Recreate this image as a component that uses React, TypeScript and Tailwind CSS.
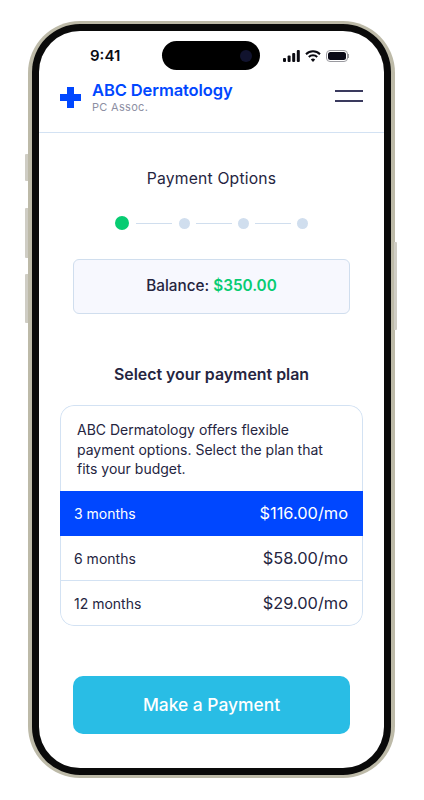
import React from 'react';

const plans = [
  { label: '3 months', price: '$116.00/mo', active: true },
  { label: '6 months', price: '$58.00/mo', active: false },
  { label: '12 months', price: '$29.00/mo', active: false },
];

const StatusIcons = () => (
  <div className="flex items-center gap-[5px]">
    <svg width="17" height="12" viewBox="0 0 17 12" fill="#0b0b12">
      <rect x="0" y="8" width="3" height="4" rx="1" />
      <rect x="4.6" y="5.5" width="3" height="6.5" rx="1" />
      <rect x="9.2" y="3" width="3" height="9" rx="1" />
      <rect x="13.8" y="0" width="3" height="12" rx="1" />
    </svg>
    <svg width="16" height="12" viewBox="0 0 16 12" fill="none" stroke="#0b0b12" strokeWidth="2">
      <path d="M1 4.2a10 10 0 0 1 14 0" />
      <path d="M3.8 7a6 6 0 0 1 8.4 0" />
      <path d="M8 12l-2.2-2.4a3 3 0 0 1 4.4 0z" fill="#0b0b12" stroke="none" />
    </svg>
    <div className="flex items-center">
      <div className="w-[22px] h-[12px] rounded-[4px] border border-[#9a9aa0] p-[1px]">
        <div className="w-full h-full rounded-[2.5px] bg-[#0b0b18]" />
      </div>
      <div className="w-[1px] h-[4px] bg-[#9a9aa0]" />
    </div>
  </div>
);

export default function App() {
  return (
    <div className="w-[424px] h-[800px] bg-white pt-[21px] pl-[28px] overflow-hidden" style={{ fontFamily: 'Inter, sans-serif' }}>
      <div className="relative w-[367px] h-[757px] rounded-[52px] bg-[#bdbaa8] px-[4px] py-[3px]">
        {/* side buttons */}
        <div className="absolute left-[-3px] top-[133px] w-[3px] h-[27px] bg-[#cfcdc4] rounded-l-[1px]" />
        <div className="absolute left-[-3px] top-[187px] w-[3px] h-[50px] bg-[#cfcdc4] rounded-l-[1px]" />
        <div className="absolute left-[-3px] top-[253px] w-[3px] h-[49px] bg-[#cfcdc4] rounded-l-[1px]" />
        <div className="absolute right-[-2px] top-[221px] w-[3px] h-[88px] bg-[#cfcdc4] rounded-r-[1px]" />

        <div className="w-full h-full rounded-[48px] bg-[#0a0a0a] p-[7px]">
          <div className="w-full h-full rounded-[41px] bg-white overflow-hidden flex flex-col">
            {/* status bar */}
            <div className="relative h-[39px] shrink-0 flex items-start justify-between pl-[51px] pr-[35px] pt-[16px]">
              <span className="text-[15px] leading-[18px] font-semibold text-[#0b0b12]">9:41</span>
              <div className="absolute left-[123px] top-[10px] w-[98px] h-[29px] rounded-full bg-black flex items-center justify-end pr-[8px]">
                <div className="w-[12px] h-[12px] rounded-full bg-[#11132e]" />
              </div>
              <div className="mt-[3px]">
                <StatusIcons />
              </div>
            </div>

            {/* header */}
            <div className="h-[63px] shrink-0 flex items-center justify-between pl-[21px] pr-[21px] border-b border-[#d3e2f3] pt-[2px]">
              <div className="flex items-center gap-[11px]">
                <svg width="21" height="21" viewBox="0 0 21 21" fill="#0047ff" className="mt-[-9px]">
                  <path d="M7 0h7v7h7v7h-7v7H7v-7H0V7h7z" />
                </svg>
                <div className="mt-[-10px] flex flex-col gap-[2px]">
                  <p className="text-[16.5px] leading-[18px] font-semibold text-[#0047ff] tracking-[-0.1px]">ABC Dermatology</p>
                  <p className="text-[11px] leading-[13px] text-[#8d8fa3] tracking-[0.3px]">PC Assoc.</p>
                </div>
              </div>
              <div className="flex flex-col gap-[8px] mt-[-12px]">
                <div className="w-[28px] h-[2px] bg-[#3a3a5e]" />
                <div className="w-[28px] h-[2px] bg-[#3a3a5e]" />
              </div>
            </div>

            {/* body */}
            <div className="flex-1 flex flex-col items-center">
              <h1 className="mt-[36px] text-[15.7px] leading-[20px] text-[#25253f] tracking-[0.2px]">Payment Options</h1>

              <div className="mt-[27px] flex items-center">
                <div className="w-[14px] h-[14px] rounded-full bg-[#07cc72]" />
                <div className="w-[36px] h-[1px] bg-[#d0deee] mx-[7px]" />
                <div className="w-[11px] h-[11px] rounded-full bg-[#d0deee]" />
                <div className="w-[36px] h-[1px] bg-[#d0deee] mx-[6px]" />
                <div className="w-[11px] h-[11px] rounded-full bg-[#d0deee]" />
                <div className="w-[36px] h-[1px] bg-[#d0deee] mx-[6px]" />
                <div className="w-[11px] h-[11px] rounded-full bg-[#d0deee]" />
              </div>

              <div className="mt-[29px] w-[277px] h-[55px] rounded-[6px] border border-[#d0deee] bg-[#f7f8fe] flex items-center justify-center text-[15.3px] font-medium text-[#25253f]">
                <span>Balance:&nbsp;</span>
                <span className="text-[#07cc72] font-semibold">$350.00</span>
              </div>

              <h2 className="mt-[51px] text-[15.9px] leading-[20px] font-semibold text-[#25253f]">Select your payment plan</h2>

              <div className="mt-[20px] w-[303px] rounded-[14px] overflow-hidden">
                <p className="h-[86px] pl-[16px] pr-[30px] pt-[14px] text-[14px] leading-[19.5px] text-[#25253f] border border-b-0 border-[#d3e2f3] rounded-t-[14px]">
                  ABC Dermatology offers flexible payment options. Select the plan that fits your budget.
                </p>
                {plans.map((plan) => (
                  <div
                    key={plan.label}
                    className={
                      plan.active
                        ? 'h-[45px] flex items-center justify-between pl-[14px] pr-[15px] bg-[#0047ff] text-white'
                        : 'h-[45px] flex items-center justify-between pl-[13px] pr-[14px] border-x border-b border-[#d3e2f3] last:rounded-b-[14px] text-[#25253f]'
                    }
                  >
                    <span className="text-[14px]">{plan.label}</span>
                    <span className="text-[16.4px]">{plan.price}</span>
                  </div>
                ))}
              </div>

              <button className="mt-[50px] w-[277px] h-[58px] rounded-[10px] bg-[#29bde5] text-white text-[17.4px] font-medium">
                Make a Payment
              </button>
            </div>
          </div>
        </div>
      </div>
    </div>
  );
}
